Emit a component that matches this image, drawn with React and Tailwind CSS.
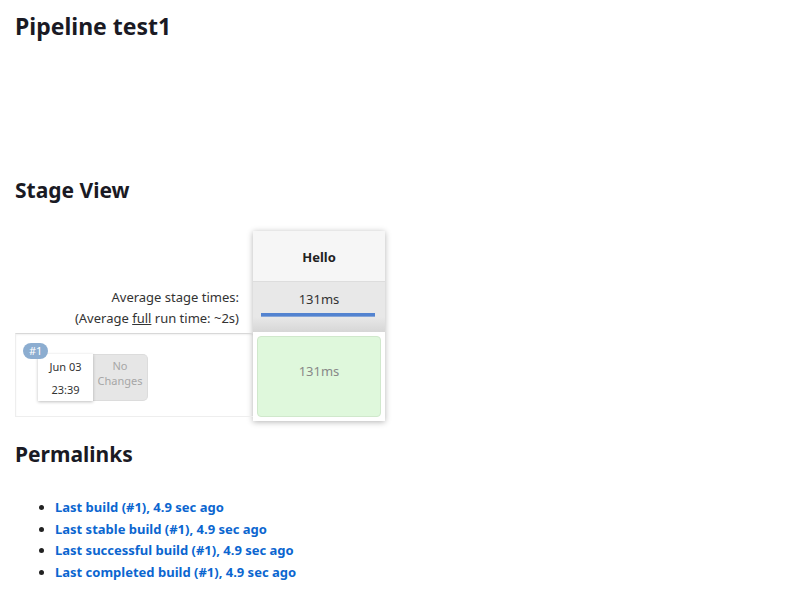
import React from "react";

const font = { fontFamily: '"Noto Sans", "Open Sans", sans-serif' };

const links = [
  "Last build (#1), 4.9 sec ago",
  "Last stable build (#1), 4.9 sec ago",
  "Last successful build (#1), 4.9 sec ago",
  "Last completed build (#1), 4.9 sec ago",
];

function StageView() {
  return (
    <div className="flex items-start">
      <div className="w-[238px] text-[13px] text-[#333]">
        <div className="h-[51px]" />
        <div className="h-[51px] flex flex-col items-end justify-center pr-[14px] leading-[21px]">
          <div>Average stage times:</div>
          <div>
            (Average <span className="underline">full</span> run time: ~2s)
          </div>
        </div>
        <div className="h-[84px] border-t border-t-[#d8d8d8] border-l border-b border-[#eeeeee] relative shadow-[inset_0_1px_2px_rgba(0,0,0,0.06)]">
          <div className="absolute left-[7px] top-[9px] z-10 h-[16px] px-[6px] rounded-full bg-[#8cadd0] text-white text-[11px] leading-[16px]">
            #1
          </div>
          <div className="flex pl-[22px] pt-[20px]">
            <div className="w-[55px] h-[47px] bg-white shadow-[0_1px_3px_rgba(0,0,0,0.25)] flex flex-col items-center pt-[1px] text-[11px] text-[#333] leading-[23px] relative">
              <div>Jun 03</div>
              <div>23:39</div>
            </div>
            <div className="w-[55px] h-[47px] bg-[#e6e6e6] rounded-r-[5px] border border-l-0 border-[#dcdcdc] flex flex-col items-center pt-[3px] text-[11px] text-[#a6a6a6] leading-[15px]">
              <div>No</div>
              <div>Changes</div>
            </div>
          </div>
        </div>
      </div>
      <div className="w-[132px] shadow-[0_1px_6px_rgba(0,0,0,0.3)] bg-white">
        <div className="h-[51px] bg-[#f6f6f6] flex items-center justify-center pt-[3px] text-[13px] font-bold text-[#222] border-b border-[#dddddd]">
          Hello
        </div>
        <div className="h-[50px] bg-[linear-gradient(to_bottom,#e8e8e8_70%,#d6d6d6)] flex flex-col items-center pt-[7px]">
          <div className="text-[13px] text-[#333] leading-[20px]">131ms</div>
          <div className="mt-[4px] -ml-[3px] w-[114px] h-[4px] bg-[#5383d0] border-b border-[#86a6d8]" />
        </div>
        <div className="p-[4px]">
          <div className="h-[81px] rounded-[4px] bg-[#dff8dc] border border-[#d0e8cc] flex justify-center pt-[24px] text-[13px] text-[#888] leading-[20px]">
            131ms
          </div>
        </div>
      </div>
    </div>
  );
}

export default function App() {
  return (
    <div className="min-h-screen bg-white px-[15px] pt-[10px]" style={font}>
      <h1 className="text-[23px] font-bold text-[#1a1a24] leading-[32px]">Pipeline test1</h1>
      <h2 className="mt-[132px] text-[21px] font-bold text-[#1a1a24] leading-[32px]">Stage View</h2>
      <div className="mt-[25px]">
        <StageView />
      </div>
      <h2 className="mt-[17px] text-[21px] font-bold text-[#1a1a24] leading-[32px]">Permalinks</h2>
      <ul className="mt-[27px] pl-[40px] list-disc text-[13px] font-bold text-[#0b66d0] leading-[21.5px] marker:text-[#222]">
        {links.map((l) => (
          <li key={l}>
            <a href="#" className="hover:underline">{l}</a>
          </li>
        ))}
      </ul>
    </div>
  );
}
